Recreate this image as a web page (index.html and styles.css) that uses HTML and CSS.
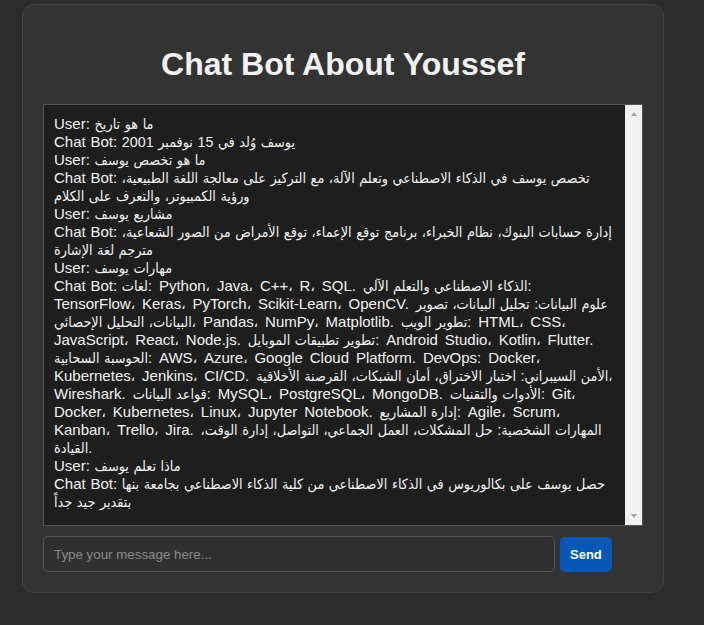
FILE: index.html
```html
<!DOCTYPE html>
<html lang="en">
<head>
<meta charset="utf-8">
<title>Chat Bot About Youssef</title>
<link rel="stylesheet" href="styles.css">
</head>
<body>
<div class="container">
  <h1 class="title">Chat Bot About Youssef</h1>
  <div class="chat-box">
    <div class="messages">
      <div class="msg">User: <span class="ar">ما هو تاريخ</span></div>
      <div class="msg">Chat Bot: <span class="ar">يوسف وُلد في 15 نوفمبر 2001</span></div>
      <div class="msg">User: <span class="ar">ما هو تخصص يوسف</span></div>
      <div class="msg">Chat Bot: <span class="ar">تخصص يوسف في الذكاء الاصطناعي وتعلم الآلة، مع التركيز على معالجة اللغة الطبيعية، ورؤية الكمبيوتر، والتعرف على الكلام</span></div>
      <div class="msg">User: <span class="ar">مشاريع يوسف</span></div>
      <div class="msg">Chat Bot: <span class="ar">إدارة حسابات البنوك، نظام الخبراء، برنامج توقع الإعماء، توقع الأمراض من الصور الشعاعية، مترجم لغة الإشارة</span></div>
      <div class="msg">User: <span class="ar">مهارات يوسف</span></div>
      <div class="msg">Chat Bot: <span class="ar">لغات:</span><span class="en"> Python، Java، C++، R، SQL. </span><span class="ar">الذكاء الاصطناعي والتعلم الآلي:</span><span class="en"> TensorFlow، Keras، PyTorch، Scikit-Learn، OpenCV. </span><span class="ar">علوم البيانات: تحليل البيانات، تصوير البيانات، التحليل الإحصائي،</span><span class="en"> Pandas، NumPy، Matplotlib. </span><span class="ar">تطوير الويب:</span><span class="en"> HTML، CSS، JavaScript، React، Node.js. </span><span class="ar">تطوير تطبيقات الموبايل:</span><span class="en"> Android Studio، Kotlin، Flutter. </span><span class="ar">الحوسبة السحابية:</span><span class="en"> AWS، Azure، Google Cloud Platform. DevOps: Docker، Kubernetes، Jenkins، CI/CD. </span><span class="ar">الأمن السيبراني: اختبار الاختراق، أمان الشبكات، القرصنة الأخلاقية،</span><span class="en"> Wireshark. </span><span class="ar">قواعد البيانات:</span><span class="en"> MySQL، PostgreSQL، MongoDB. </span><span class="ar">الأدوات والتقنيات:</span><span class="en"> Git، Docker، Kubernetes، Linux، Jupyter Notebook. </span><span class="ar">إدارة المشاريع:</span><span class="en"> Agile، Scrum، Kanban، Trello، Jira. </span><span class="ar">المهارات الشخصية: حل المشكلات، العمل الجماعي، التواصل، إدارة الوقت، القيادة.</span></div>
      <div class="msg">User: <span class="ar">ماذا تعلم يوسف</span></div>
      <div class="msg">Chat Bot: <span class="ar">حصل يوسف على بكالوريوس في الذكاء الاصطناعي من كلية الذكاء الاصطناعي بجامعة بنها بتقدير جيد جداً</span></div>
    </div>
    <div class="scrollbar">
      <span class="arrow-up"></span>
      <span class="arrow-down"></span>
    </div>
  </div>
  <div class="input-row">
    <input class="msg-input" type="text" placeholder="Type your message here...">
    <button class="send-btn" type="button">Send</button>
  </div>
</div>
</body>
</html>
```

FILE: styles.css
```css
html {
  background: #2c2c2c;
}

body {
  margin: 0;
  padding: 4px 18px 0 0;
  background: #2c2c2c;
  color: #f0f0f0;
  font-family: "Liberation Sans", Arial, "DejaVu Sans Condensed", "DejaVu Sans", sans-serif;
}

.container {
  width: 600px;
  margin: 0 auto;
  padding: 20px;
  background: #333333;
  border: 1px solid #444444;
  border-radius: 12px;
}

.title {
  margin: 21px 0;
  font-size: 32px;
  font-weight: bold;
  text-align: center;
  color: #f2f2f2;
}

.chat-box {
  box-sizing: border-box;
  display: flex;
  width: 100%;
  height: 422px;
  background: #1e1e1e;
  border: 1px solid #555555;
}

.messages {
  flex: 1;
  min-width: 0;
  padding: 10px;
  overflow: hidden;
  font-size: 15px;
  line-height: 18px;
  word-spacing: 0.55px;
  color: #f2f2f2;
}

.ar {
  font-size: 14.3px;
}

.en {
  word-spacing: 2.8px;
}

.scrollbar {
  flex: 0 0 17px;
  display: flex;
  flex-direction: column;
  justify-content: space-between;
  align-items: center;
  background: #f1f1f1;
}

.arrow-up {
  margin-top: 7px;
  width: 0;
  height: 0;
  border-left: 3.5px solid transparent;
  border-right: 3.5px solid transparent;
  border-bottom: 4px solid #a3a3a3;
}

.arrow-down {
  margin-bottom: 7px;
  width: 0;
  height: 0;
  border-left: 3.5px solid transparent;
  border-right: 3.5px solid transparent;
  border-top: 4px solid #a3a3a3;
}

.input-row {
  display: flex;
  align-items: center;
  gap: 5px;
  margin-top: 10px;
}

.msg-input {
  box-sizing: border-box;
  flex: 0 0 512px;
  height: 36px;
  padding: 0 10px;
  background: #303030;
  border: 1px solid #555555;
  border-radius: 5px;
  color: #f0f0f0;
  font-family: "Liberation Sans", Arial, sans-serif;
  font-size: 13.33px;
  outline: none;
}

.msg-input::placeholder {
  color: #8a8a8a;
}

.send-btn {
  box-sizing: border-box;
  height: 35px;
  padding: 0 10px;
  background: #0459b7;
  border: none;
  border-radius: 5px;
  color: #ffffff;
  font-family: "Liberation Sans", Arial, sans-serif;
  font-size: 13px;
  font-weight: bold;
  cursor: pointer;
}
```
